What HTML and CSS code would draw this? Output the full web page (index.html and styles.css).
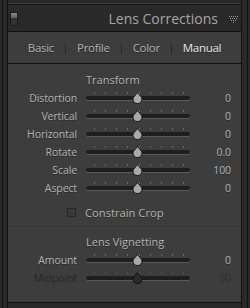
FILE: index.html
```html
<!DOCTYPE html>
<html lang="en">
<head>
    <meta charset="UTF-8">
    <title>Lens Corrections</title>
    <link rel="stylesheet" href="styles.css">
</head>
<body>
    <div class="outer">
        <div class="panel">
            <div class="topline"></div>
            <div class="header">
                <span class="toggle"></span>
                <span class="title">Lens Corrections</span>
                <svg class="collapse" width="9" height="7" viewBox="0 0 9 7">
                    <g fill="#9a9a9a">
                        <rect x="0" y="0" width="1" height="1"/><rect x="2" y="0" width="1" height="1"/><rect x="4" y="0" width="1" height="1"/><rect x="6" y="0" width="1" height="1"/><rect x="8" y="0" width="1" height="1"/>
                        <rect x="1" y="2" width="1" height="1"/><rect x="3" y="2" width="1" height="1"/><rect x="5" y="2" width="1" height="1"/><rect x="7" y="2" width="1" height="1"/>
                        <rect x="2" y="4" width="1" height="1"/><rect x="4" y="4" width="1" height="1"/><rect x="6" y="4" width="1" height="1"/>
                        <rect x="4" y="6" width="1" height="1"/>
                    </g>
                </svg>
            </div>

            <div class="box">
                <div class="tabs">
                    <span class="tab">Basic</span>
                    <span class="sep"></span>
                    <span class="tab">Profile</span>
                    <span class="sep"></span>
                    <span class="tab">Color</span>
                    <span class="sep"></span>
                    <span class="tab active">Manual</span>
                </div>

                <div class="content">
                    <div class="heading">Transform</div>

                    <div class="row">
                        <span class="label">Distortion</span>
                        <div class="slider"><div class="ticks"><i></i><i></i><i></i><i></i><i></i><i></i><i></i><i></i><i></i></div><div class="track"></div><svg class="thumb" width="11" height="12" viewBox="0 0 11 12"><path d="M5.5 0.5 L9.7 5.5 A4.5 4.5 0 1 1 1.3 5.5 Z"/></svg></div>
                        <span class="value">0</span>
                    </div>
                    <div class="row">
                        <span class="label">Vertical</span>
                        <div class="slider"><div class="ticks"><i></i><i></i><i></i><i></i><i></i><i></i><i></i><i></i><i></i></div><div class="track"></div><svg class="thumb" width="11" height="12" viewBox="0 0 11 12"><path d="M5.5 0.5 L9.7 5.5 A4.5 4.5 0 1 1 1.3 5.5 Z"/></svg></div>
                        <span class="value">0</span>
                    </div>
                    <div class="row">
                        <span class="label">Horizontal</span>
                        <div class="slider"><div class="ticks"><i></i><i></i><i></i><i></i><i></i><i></i><i></i><i></i><i></i></div><div class="track"></div><svg class="thumb" width="11" height="12" viewBox="0 0 11 12"><path d="M5.5 0.5 L9.7 5.5 A4.5 4.5 0 1 1 1.3 5.5 Z"/></svg></div>
                        <span class="value">0</span>
                    </div>
                    <div class="row">
                        <span class="label">Rotate</span>
                        <div class="slider"><div class="ticks"><i></i><i></i><i></i><i></i><i></i><i></i><i></i><i></i><i></i></div><div class="track"></div><svg class="thumb" width="11" height="12" viewBox="0 0 11 12"><path d="M5.5 0.5 L9.7 5.5 A4.5 4.5 0 1 1 1.3 5.5 Z"/></svg></div>
                        <span class="value">0.0</span>
                    </div>
                    <div class="row">
                        <span class="label">Scale</span>
                        <div class="slider"><div class="ticks"><i></i><i></i><i></i><i></i><i></i><i></i><i></i><i></i><i></i></div><div class="track"></div><svg class="thumb" width="11" height="12" viewBox="0 0 11 12"><path d="M5.5 0.5 L9.7 5.5 A4.5 4.5 0 1 1 1.3 5.5 Z"/></svg></div>
                        <span class="value">100</span>
                    </div>
                    <div class="row">
                        <span class="label">Aspect</span>
                        <div class="slider"><div class="ticks"><i></i><i></i><i></i><i></i><i></i><i></i><i></i><i></i><i></i></div><div class="track"></div><svg class="thumb" width="11" height="12" viewBox="0 0 11 12"><path d="M5.5 0.5 L9.7 5.5 A4.5 4.5 0 1 1 1.3 5.5 Z"/></svg></div>
                        <span class="value">0</span>
                    </div>

                    <div class="check-row">
                        <span class="checkbox"></span>
                        <span class="check-label">Constrain Crop</span>
                    </div>

                    <div class="divider"></div>

                    <div class="heading">Lens Vignetting</div>

                    <div class="row">
                        <span class="label">Amount</span>
                        <div class="slider"><div class="ticks"><i></i><i></i><i></i><i></i><i></i><i></i><i></i><i></i><i></i></div><div class="track"></div><svg class="thumb" width="11" height="12" viewBox="0 0 11 12"><path d="M5.5 0.5 L9.7 5.5 A4.5 4.5 0 1 1 1.3 5.5 Z"/></svg></div>
                        <span class="value">0</span>
                    </div>
                    <div class="row disabled">
                        <span class="label">Midpoint</span>
                        <div class="slider"><div class="ticks"><i></i><i></i><i></i><i></i><i></i><i></i><i></i><i></i><i></i></div><div class="track"></div><svg class="thumb" width="11" height="12" viewBox="0 0 11 12"><path d="M5.5 0.5 L9.7 5.5 A4.5 4.5 0 1 1 1.3 5.5 Z"/></svg></div>
                        <span class="value">50</span>
                    </div>
                </div>
            </div>
        </div>
    </div>
</body>
</html>
```

FILE: styles.css
```css
body {
    margin: 0;
    background-color: #292929;
    font-family: 'Open Sans', 'Noto Sans', sans-serif;
    color: #b4b4b4;
    height: 308px;
    overflow: hidden;
}
.outer {
    margin-left: 2px;
    width: 238px;
    height: 308px;
    border-left: 1px solid #111;
    border-right: 1px solid #111;
    padding: 0 2px 0 4px;
}
.panel {
    width: 235px;
    height: 308px;
    border-left: 1px solid #111;
    border-right: 1px solid #111;
    padding-top: 3px;
    box-sizing: border-box;
}
.topline {
    height: 1px;
    background-color: #3e3e3e;
    border-bottom: 1px solid #141414;
}
.header {
    height: 26px;
    display: flex;
    align-items: center;
    position: relative;
}
.toggle {
    position: absolute;
    left: 2px;
    top: 7px;
    width: 8px;
    height: 14px;
    box-sizing: border-box;
    border: 1px solid #1c1c1c;
    background: linear-gradient(#8a8a8a, #5c5c5c 45%, #303030 45%, #343434);
}
.title {
    margin-left: auto;
    margin-right: 11px;
    font-size: 14px;
    color: #a6a6a6;
}
.collapse {
    margin-right: 3px;
    margin-top: 2px;
}
.box {
    border-top: 1px solid #111;
    border-bottom: 1px solid #111;
    background-color: #3d3d3d;
}
.tabs {
    height: 31px;
    border-bottom: 1px solid #111;
    display: flex;
    align-items: center;
    justify-content: center;
    gap: 11px;
    font-size: 11.5px;
    letter-spacing: -0.3px;
}
.tab {
    color: #b0b0b0;
    text-shadow: 0 1px 0 rgba(0, 0, 0, 0.35);
}
.tab.active {
    color: #e6e6e6;
}
.sep {
    width: 1px;
    height: 10px;
    margin-top: 3px;
    background-color: #262626;
}
.content {
    height: 238px;
    padding-top: 7px;
    box-sizing: border-box;
}
.heading {
    height: 18px;
    line-height: 18px;
    padding-left: 78px;
    font-size: 11px;
    color: #b4b4b4;
    text-shadow: 0 1px 0 rgba(0, 0, 0, 0.35);
}
.row {
    display: grid;
    grid-template-columns: 69px 104px 32px;
    column-gap: 9px;
    height: 18px;
    align-items: center;
    font-size: 10.5px;
    letter-spacing: -0.1px;
    text-shadow: 0 1px 0 rgba(0, 0, 0, 0.35);
}
.label {
    text-align: right;
}
.value {
    text-align: right;
}
.slider {
    position: relative;
    height: 18px;
}
.ticks {
    position: absolute;
    left: 8px;
    right: 6px;
    top: 3px;
    display: flex;
    justify-content: space-between;
}
.ticks i {
    width: 1px;
    height: 2px;
    background-color: #6a6a6a;
}
.track {
    position: absolute;
    left: 0;
    right: 0;
    top: 7px;
    height: 4px;
    border-radius: 2px;
    background-color: #1e1e1e;
    box-shadow: 0 1px 0 #5a5a5a;
}
.thumb {
    position: absolute;
    left: 46px;
    top: 3px;
}
.thumb path {
    fill: #a9a9a9;
    stroke: #151515;
    stroke-width: 1;
}
.check-row {
    display: flex;
    align-items: center;
    height: 24px;
    margin-top: 3px;
    padding-left: 59px;
    gap: 9px;
}
.checkbox {
    width: 9px;
    height: 9px;
    box-sizing: border-box;
    border: 1px solid #262626;
    background-color: #393939;
}
.check-label {
    font-size: 11.2px;
    color: #b4b4b4;
    text-shadow: 0 1px 0 rgba(0, 0, 0, 0.35);
}
.divider {
    margin-top: 2px;
    height: 1px;
    background-color: #333;
    border-bottom: 1px solid #444;
    margin-bottom: 5px;
}
.disabled {
    color: #272727;
    text-shadow: none;
}
.disabled .value {
    color: #2f2f2f;
}
.disabled .ticks i {
    background-color: #555;
}
.disabled .thumb path {
    fill: #2a2a2a;
    stroke: #111;
}
```
